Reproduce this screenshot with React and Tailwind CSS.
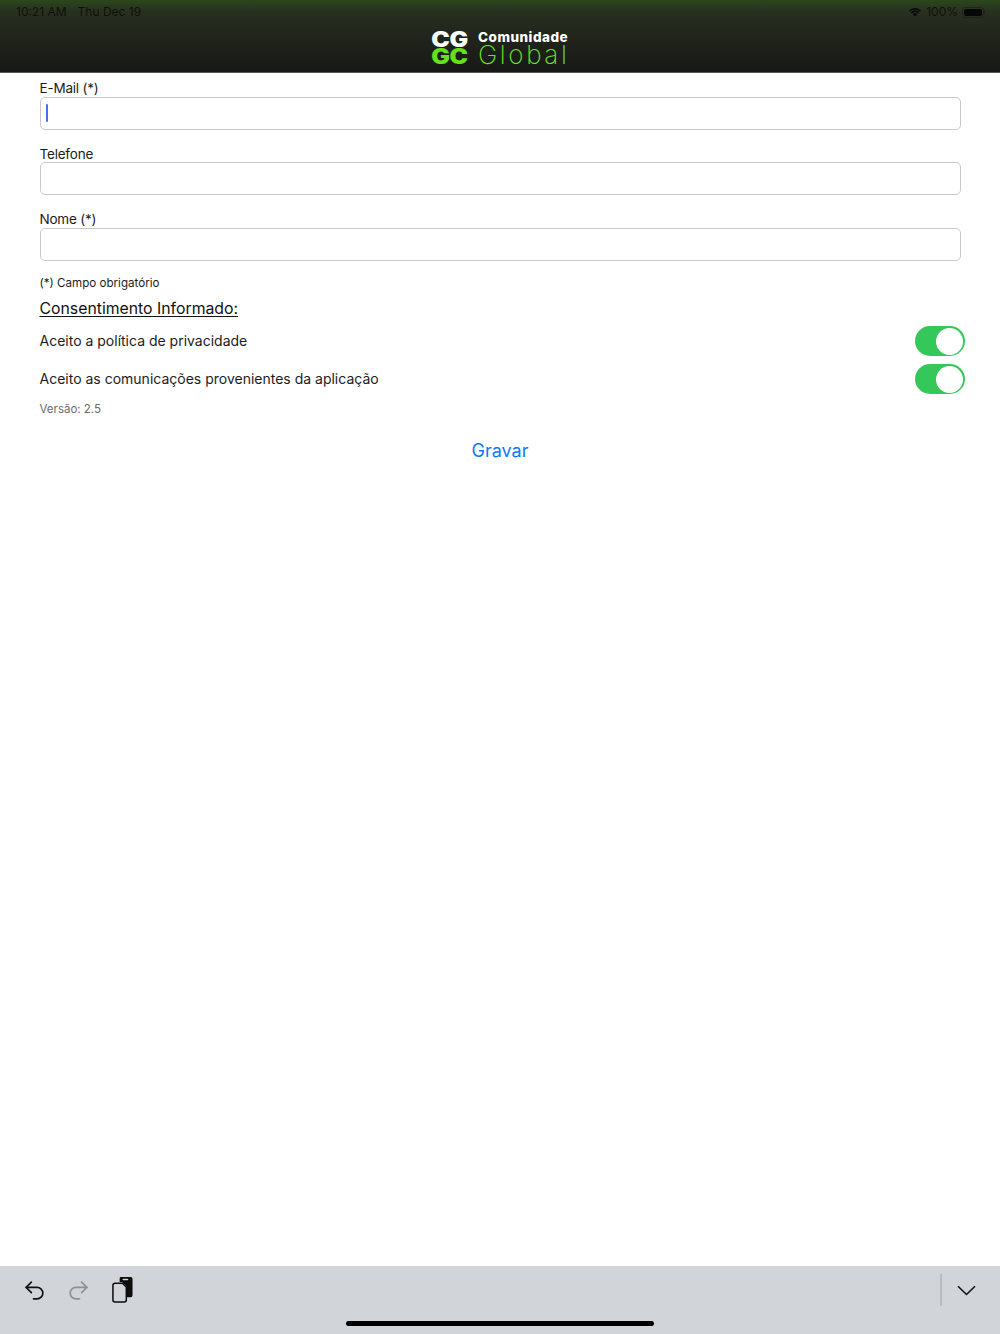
import React from "react";
import { Undo2 } from "lucide-react";

const font = { fontFamily: "Inter, 'Liberation Sans', sans-serif" };

function Field({ label, first, labelPad = "pt-[7px]" }) {
  return (
    <div className="flex flex-col">
      <label className={`h-[24px] text-[13.5px] tracking-[-0.2px] leading-[17px] text-[#1c1c1c] ${labelPad}`}>{label}</label>
      <div className="h-[33px] rounded-[5px] border border-[#c9c9c9] bg-white flex items-center pl-[6px]">
        {first && <span className="w-[2px] h-[18px] bg-[#4a6ef0] rounded-full -ml-[1px] -mt-[1px]" />}
      </div>
    </div>
  );
}

function Toggle() {
  return (
    <div className="w-[50px] h-[30px] rounded-full bg-[#34c759] flex items-center justify-end pr-[1.5px] shrink-0">
      <div className="w-[27px] h-[27px] rounded-full bg-white" />
    </div>
  );
}

function ConsentRow({ text }) {
  return (
    <div className="h-[38px] flex items-center justify-between -mr-[4px]">
      <span className="text-[14px] text-[#1c1c1c] -mt-[2px]">{text}</span>
      <Toggle />
    </div>
  );
}

export default function App() {
  return (
    <div className="relative flex flex-col h-[1334px] bg-white overflow-hidden" style={font}>
      {/* HEADER */}
      <header className="h-[73px] shrink-0 flex flex-col bg-[linear-gradient(to_bottom,#2c471c_0%,#283020_16%,#23281d_40%,#171817_100%)] border-b border-[#55585a]">
        <div className="h-[24px] flex items-center justify-between pl-[16px] pr-[15px] text-[12px] text-[#0e110b]">
          <div className="flex gap-[11px]">
            <span>10:21 AM</span>
            <span>Thu Dec 19</span>
          </div>
          <div className="flex items-center gap-[4px]">
            <svg width="14" height="10" viewBox="0 0 14 10" fill="#0b0d09">
              <path d="M7 2.8c1.9 0 3.6.7 4.9 1.9l1.1-1.2C11.4 2 9.300 1 7 1S2.600 2 1 3.500l1.100 1.200C3.400 3.500 5.100 2.800 7 2.800z" />
              <path d="M7 5.300c1.200 0 2.200.4 3.100 1.200l1.100-1.200C10.100 4.200 8.600 3.600 7 3.600s-3.100.6-4.200 1.700l1.100 1.200c.9-.8 1.900-1.200 3.100-1.200z" />
              <path d="M7 9.600 9.300 7.200C8.700 6.600 7.900 6.200 7 6.200s-1.700.4-2.300 1z" />
            </svg>
            <span>100%</span>
            <div className="flex items-center">
              <div className="w-[22px] h-[11px] rounded-[3px] border border-[#20241b] p-[1px]">
                <div className="w-full h-full rounded-[2px] bg-[#060706]" />
              </div>
              <div className="w-[1px] h-[4px] bg-[#20241b]" />
            </div>
          </div>
        </div>
        <div className="flex-1 flex items-start justify-center gap-[10px] pt-[7px] pl-[1px]">
          <div className="flex flex-col items-center text-[21px] leading-[17px] font-black tracking-[-0.4px] w-[37px] scale-x-[1.18]">
            <span className="text-white">CG</span>
            <span className="text-[#66e01a]">GC</span>
          </div>
          <div className="flex flex-col w-[92px] -mt-[1px]">
            <span className="text-[13.500px] leading-[14px] font-extrabold tracking-[0.5px] text-white whitespace-nowrap">Comunidade</span>
            <span className="text-[26px] leading-[22px] font-extralight tracking-[2.600px] text-[#6ee02a] whitespace-nowrap">Global</span>
          </div>
        </div>
      </header>

      {/* FORM */}
      <main className="flex-1 flex flex-col px-[39.500px]">
        <Field label="E-Mail (*)" first />
        <div className="mt-[8px]">
          <Field label="Telefone" labelPad="pt-[8px]" />
        </div>
        <div className="mt-[9px]">
          <Field label="Nome (*)" />
        </div>
        <p className="text-[11.600px] leading-[16px] mt-[14px] text-[#1c1c1c]">(*) Campo obrigatório</p>
        <h2 className="text-[15.800px] leading-[22px] mt-[7px] mb-[2px] underline underline-offset-2 decoration-1 text-[#111]">
          Consentimento Informado:
        </h2>
        <ConsentRow text="Aceito a política de privacidade" />
        <ConsentRow text="Aceito as comunicações provenientes da aplicação" />
        <p className="text-[11.500px] leading-[16px] mt-[3px] text-[#6b6b6b]">Versão: 2.5</p>
        <button className="mt-[22px] text-[18px] leading-[24px] text-[#0a7aff] self-center">Gravar</button>
      </main>

      {/* KEYBOARD TOOLBAR */}
      <footer className="h-[68px] shrink-0 bg-[#d1d4d9] flex items-start pl-[22px] pr-[24px] pt-[8px]">
        <div className="h-[32px] flex items-center gap-[19px]">
          <Undo2 size={25} strokeWidth={1.6} className="text-[#111]" />
          <Undo2 size={25} strokeWidth={1.6} className="text-[#8f9194] -scale-x-100" />
          <svg width="21" height="26" viewBox="0 0 22 27" className="ml-[2px]">
            <path d="M8 1.500a1.500 1.500 0 0 1 1.500-1.500h10A2 2 0 0 1 21.500 2v17a2 2 0 0 1-2 2H15V9.500L10.500 5H8z" fill="#0d0d0d" />
            <rect x="11" y="1.600" width="6" height="1.600" rx=".8" fill="#d1d4d9" />
            <path d="M3 6.500h8l4 4V24a2 2 0 0 1-2 2H3a2 2 0 0 1-2-2V8.500a2 2 0 0 1 2-2z" fill="#d1d4d9" stroke="#0d0d0d" strokeWidth="1.600" />
          </svg>
        </div>
        <div className="ml-auto flex items-center h-[32px] gap-[15px]">
          <div className="w-[2px] h-[32px] bg-[#b9bbbf]" />
          <svg width="19" height="11" viewBox="0 0 19 11" fill="none" stroke="#111" strokeWidth="1.600">
            <path d="M1 1.200 9.500 9.500 18 1.200" />
          </svg>
        </div>
      </footer>

      {/* HOME INDICATOR */}
      <div className="absolute bottom-[8px] left-[346px] w-[308px] h-[5px] rounded-full bg-black" />
    </div>
  );
}
